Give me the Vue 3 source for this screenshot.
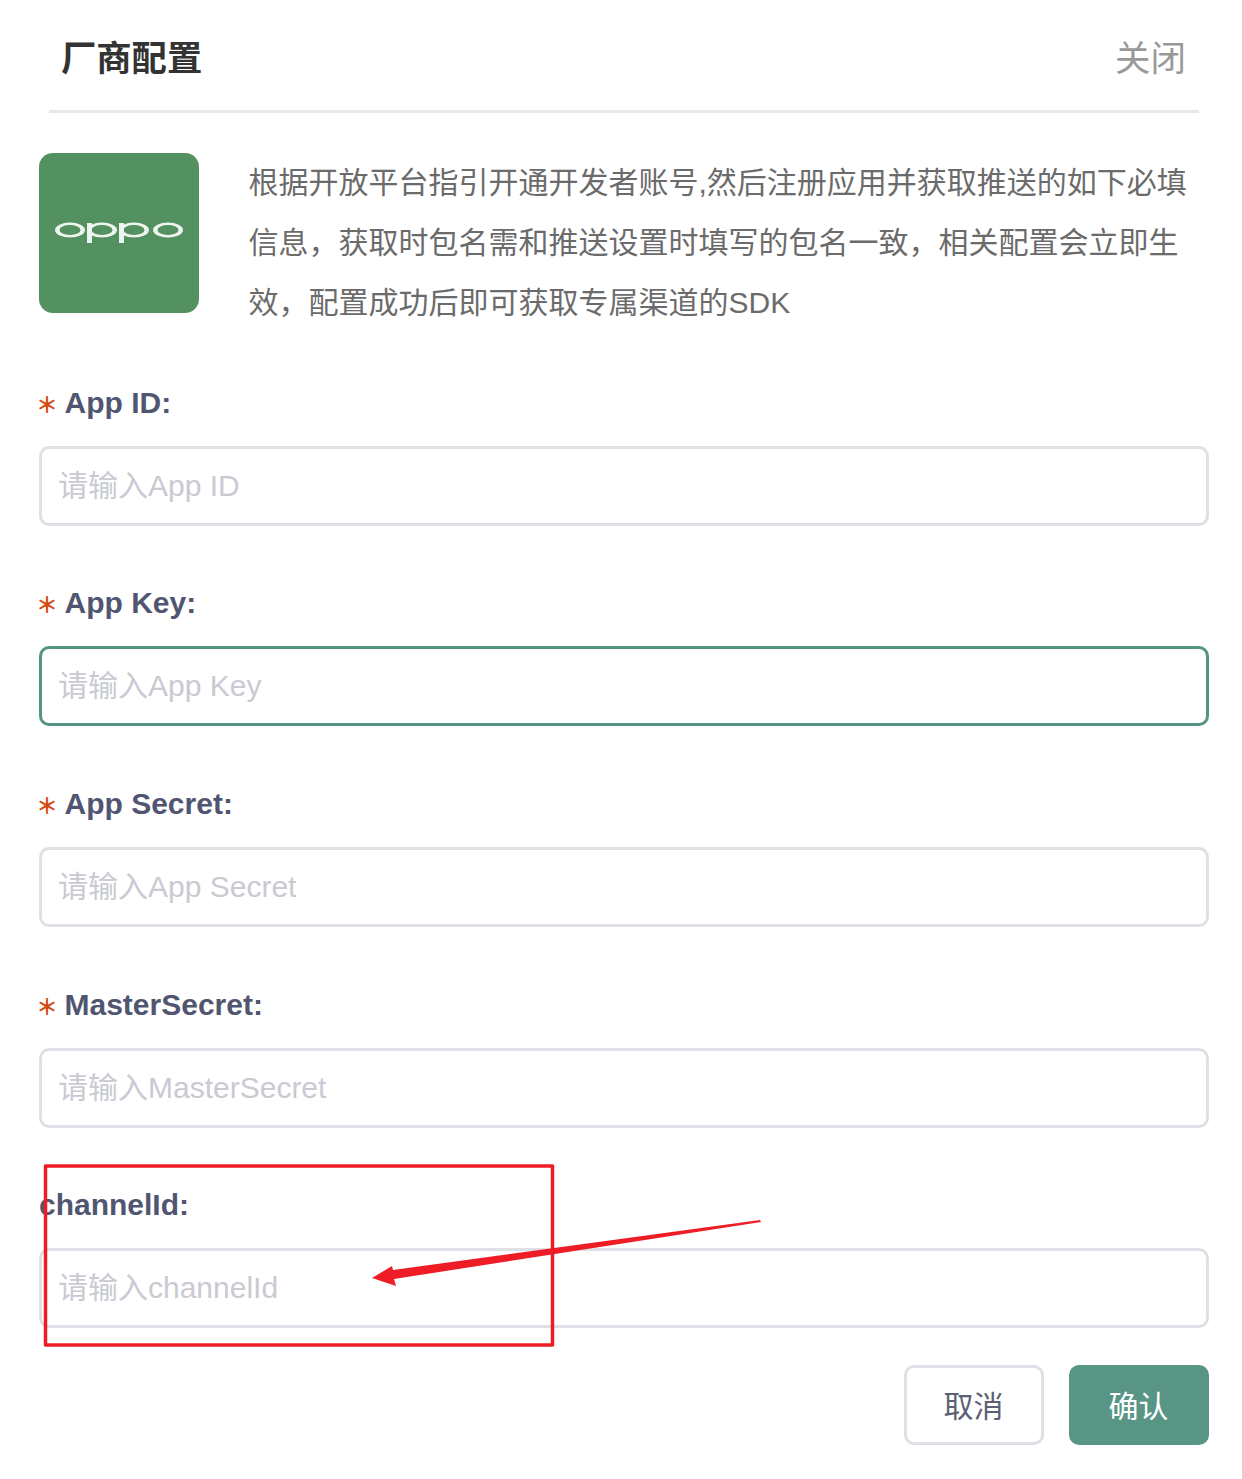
<script setup>
const fields = [
    { label: 'App ID:', placeholder: '请输入App ID', required: true },
    { label: 'App Key:', placeholder: '请输入App Key', required: true, active: true },
    { label: 'App Secret:', placeholder: '请输入App Secret', required: true },
    { label: 'MasterSecret:', placeholder: '请输入MasterSecret', required: true },
    { label: 'channelId:', placeholder: '请输入channelId', required: false }
];
</script>

<template>
    <main class="dialog">
        <header class="head">
            <h1>厂商配置</h1>
            <span class="close">关闭</span>
        </header>

        <section class="intro">
            <svg class="logo" viewBox="0 0 160 160" aria-label="oppo">
                <rect width="160" height="160" rx="14" fill="#539160" />
                <g fill="#eef5ef">
                    <ellipse cx="31" cy="77" rx="15" ry="7.5" />
                    <ellipse cx="63" cy="77" rx="15" ry="7.5" />
                    <ellipse cx="95" cy="77" rx="15" ry="7.5" />
                    <ellipse cx="129" cy="77" rx="15" ry="7.5" />
                </g>
                <g fill="#539160">
                    <ellipse cx="31" cy="77" rx="10.5" ry="5" />
                    <ellipse cx="63" cy="77" rx="10.5" ry="5" />
                    <ellipse cx="95" cy="77" rx="10.5" ry="5" />
                    <ellipse cx="129" cy="77" rx="10.5" ry="5" />
                </g>
                <rect x="48" y="70" width="5" height="20" fill="#eef5ef" />
                <rect x="80" y="70" width="5" height="20" fill="#eef5ef" />
            </svg>
            <p>根据开放平台指引开通开发者账号,然后注册应用并获取推送的如下必填信息，获取时包名需和推送设置时填写的包名一致，相关配置会立即生效，配置成功后即可获取专属渠道的SDK</p>
        </section>

        <form class="form" @submit.prevent>
            <div class="field" v-for="item in fields" :key="item.label">
                <label>
                    <i v-if="item.required">＊</i>{{ item.label }}
                </label>
                <input type="text" :class="{ active: item.active }" :placeholder="item.placeholder">
            </div>
        </form>

        <footer class="actions">
            <button type="button" class="cancel">取消</button>
            <button type="button" class="ok">确认</button>
        </footer>

        <!-- red markup drawn over the screenshot -->
        <svg class="markup" width="1242" height="1479" viewBox="0 0 1242 1479">
            <rect x="45.5" y="1166" width="507" height="179" fill="none" stroke="#ee1c25" stroke-width="3.5" stroke-linejoin="round" />
            <polygon points="760,1220 393,1270 392,1266 372,1278 396,1286 394,1279 761,1222" fill="#ee1c25" />
        </svg>
    </main>
</template>

<style>
html,
body {
    background: #fff;
}
</style>

<style scoped>
.dialog {
    position: relative;
    width: 1242px;
    height: 1479px;
    overflow: hidden;
    background: #fff;
    font-family: "Liberation Sans", "Noto Sans CJK SC", sans-serif;
}

.head {
    display: flex;
    justify-content: space-between;
    align-items: center;
    box-sizing: border-box;
    height: 113px;
    margin: 0 43px 0 49px;
    padding: 0 13px;
    border-bottom: 3px solid #e8e8e8;
}

.head h1 {
    margin: 0 0 0 -1px;
    font-size: 35.3px;
    font-weight: bold;
    color: #333;
}

.close {
    font-size: 35.5px;
    color: #999;
}

.intro {
    display: flex;
    margin: 40px 33px 0 39px;
}

.logo {
    flex: none;
    width: 160px;
    height: 160px;
}

.intro p {
    width: 945px;
    margin: 0 0 0 49.5px;
    font-size: 30px;
    line-height: 60px;
    color: #6b6b6b;
}

.form {
    display: flex;
    flex-direction: column;
    gap: 57.6px;
    margin: 49.8px 33px 0 39px;
}

.field label {
    display: block;
    height: 40px;
    margin-bottom: 23px;
    font-size: 30px;
    line-height: 40px;
    font-weight: bold;
    color: #515670;
}

.field label i {
    display: inline-block;
    width: 28.5px;
    margin-left: -3px;
    font-size: 22px;
    font-style: normal;
    font-weight: bold;
    vertical-align: 0;
    color: #d4490f;
}

.field input {
    display: block;
    box-sizing: border-box;
    width: 100%;
    height: 80px;
    padding: 0 16px;
    border: 3px solid #dfe0e6;
    border-radius: 10px;
    outline: none;
    font-family: inherit;
    font-size: 30px;
    background: #fff;
}

.field input::placeholder {
    color: #c9cad2;
    opacity: 1;
}

.field input.active {
    border-color: #559484;
}

.actions {
    display: flex;
    justify-content: flex-end;
    gap: 25px;
    margin: 36.8px 33px 0 0;
}

.actions button {
    box-sizing: border-box;
    width: 140px;
    height: 80px;
    padding: 0 1px 2px 0;
    border-radius: 10px;
    font-family: inherit;
    font-size: 30px;
}

.cancel {
    border: 3px solid #dfe0e6;
    background: #fff;
    color: #5c6075;
}

.ok {
    border: 0;
    background: #589585;
    color: #fff;
}

.markup {
    position: absolute;
    left: 0;
    top: 0;
    pointer-events: none;
}
</style>
